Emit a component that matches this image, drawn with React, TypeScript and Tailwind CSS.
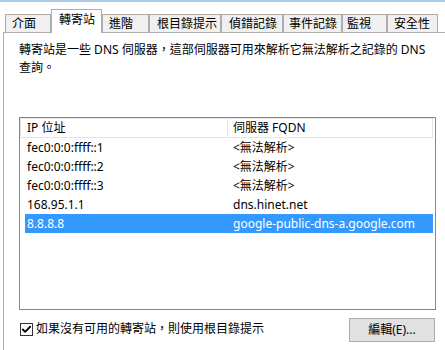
import { Check } from "lucide-react";

const tabs = [
  { label: "介面", w: "w-[46px]", pl: "pl-[6px]" },
  { label: "轉寄站", w: "w-[51px]", pl: "pl-[7px]", active: true },
  { label: "進階", w: "w-[47px]", pl: "pl-[6px]" },
  { label: "根目錄提示", w: "w-[72px]", pl: "pl-[7px]" },
  { label: "偵錯記錄", w: "w-[62px]", pl: "pl-[7px]" },
  { label: "事件記錄", w: "w-[59px]", pl: "pl-[5px]" },
  { label: "監視", w: "w-[45px]", pl: "pl-[4px]" },
  { label: "安全性", w: "w-[51px]", pl: "pl-[6px]" },
];

const rows = [
  { ip: "fec0:0:0:ffff::1", fqdn: "<無法解析>" },
  { ip: "fec0:0:0:ffff::2", fqdn: "<無法解析>" },
  { ip: "fec0:0:0:ffff::3", fqdn: "<無法解析>" },
  { ip: "168.95.1.1", fqdn: "dns.hinet.net" },
  { ip: "8.8.8.8", fqdn: "google-public-dns-a.google.com", selected: true },
];

export default function App() {
  return (
    <div className="w-[445px] h-[350px] overflow-hidden bg-white text-[12px] text-black font-['Noto_Sans','Noto_Sans_CJK_TC',sans-serif]">
      {/* window frame edge */}
      <div className="h-[2px] bg-[#a9cbe9]" />

      {/* Tabs */}
      <div className="h-[30px] flex items-end pl-[5px]">
        {tabs.map((t) =>
          t.active ? (
            <div
              key={t.label}
              className={`${t.w} ${t.pl} relative z-10 h-[24px] -mb-[1px] bg-white border-t border-l border-r border-[#adadad] flex items-center pb-[3px] leading-none whitespace-nowrap`}
            >
              {t.label}
            </div>
          ) : (
            <div
              key={t.label}
              className={`${t.w} ${t.pl} h-[18px] bg-[#f0f0f0] border-t border-l border-r border-[#adadad] flex items-center leading-none whitespace-nowrap`}
            >
              {t.label}
            </div>
          ),
        )}
      </div>

      {/* Panel */}
      <div className="ml-[3px] h-[318px] border-t border-l border-[#adadad] bg-white pt-[8px]">
        <p className="pl-[15px] leading-[18px] whitespace-nowrap">
          轉寄站是一些 DNS 伺服器，這部伺服器可用來解析它無法解析之記錄的 DNS
          <br />
          查詢。
        </p>

        {/* List view */}
        <div className="ml-[15px] mt-[40px] w-[417px] h-[193px] border border-[#828790] bg-white">
          <div className="flex h-[20px]">
            <div className="w-[208px] border border-[#e5e5e5] pl-[6px] flex items-center leading-none">
              IP 位址
            </div>
            <div className="w-[205px] border border-l-0 border-[#e5e5e5] pl-[5px] flex items-center leading-none">
              伺服器 FQDN
            </div>
          </div>
          {rows.map((r) => (
            <div
              key={r.ip}
              className={`ml-[5px] w-[408px] h-[19px] flex items-center leading-none ${
                r.selected ? "bg-[#3399ff] text-white" : ""
              }`}
            >
              <div className="w-[208px] pl-[2px]">{r.ip}</div>
              <div className="flex-1">{r.fqdn}</div>
            </div>
          ))}
        </div>

        {/* Bottom row */}
        <div className="ml-[16px] mt-[8px] w-[415px] flex items-center justify-between">
          <label className="flex items-center gap-[3px] mt-[-2px]">
            <span className="w-[13px] h-[13px] border border-[#333333] bg-white flex items-center justify-center">
              <Check className="w-[11px] h-[11px]" strokeWidth={4} />
            </span>
            <span className="leading-none">如果沒有可用的轉寄站，則使用根目錄提示</span>
          </label>
          <button className="w-[86px] h-[24px] bg-[#e1e1e1] border border-[#adadad] flex items-center justify-center leading-none">
            編輯(E)...
          </button>
        </div>
      </div>
    </div>
  );
}
